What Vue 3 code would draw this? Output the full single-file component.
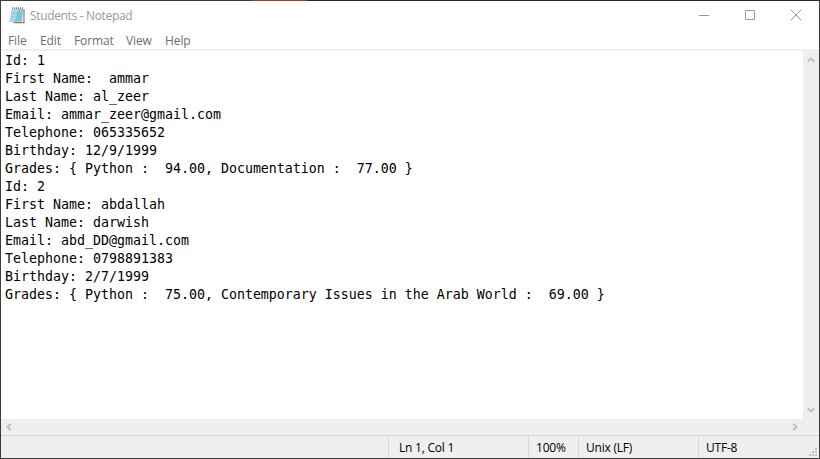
<script setup>
const menu = [
  { label: 'File', cls: 'file' },
  { label: 'Edit', cls: 'edit' },
  { label: 'Format', cls: 'format' },
  { label: 'View', cls: 'view' },
  { label: 'Help', cls: 'help' },
]

const content = [
  'Id: 1',
  'First Name:  ammar',
  'Last Name: al_zeer',
  'Email: ammar_zeer@gmail.com',
  'Telephone: 065335652',
  'Birthday: 12/9/1999',
  'Grades: { Python :  94.00, Documentation :  77.00 }',
  'Id: 2',
  'First Name: abdallah',
  'Last Name: darwish',
  'Email: abd_DD@gmail.com',
  'Telephone: 0798891383',
  'Birthday: 2/7/1999',
  'Grades: { Python :  75.00, Contemporary Issues in the Arab World :  69.00 }',
].join('\n')
</script>

<template>
  <div class="window">
    <div class="edge"></div>
    <header class="titlebar">
      <svg class="app-icon" width="16" height="17" viewBox="0 0 16 17">
        <path d="M14 2h1.6v14.2H4.5V15H14z" fill="#8d8062" />
        <path d="M3 2h11.4v13H1.5L.8 14z" fill="#e8f5f7" />
        <path d="M3 2h11l-1.2 12.8H.6z" fill="#7cc6d6" />
        <path d="M3 2h6L6 14.8H.6z" fill="#a2dce6" />
        <path d="M2.8 6.5h10M2.4 9.5h10M2 12.5h10" stroke="#6bb8cb" stroke-width=".4" />
        <path d="M3 1.5h11" stroke="#dfe3df" stroke-width="1.6" />
        <path d="M3.5 .5v1.2M5.5 .5v1.2M7.5 .5v1.2M9.5 .5v1.2M11.5 .5v1.2M13.5 .5v1.2" stroke="#425961" stroke-width="1" />
      </svg>
      <span class="title">Students - Notepad</span>
      <div class="controls">
        <svg width="10" height="10" viewBox="0 0 10 10"><path d="M0 5.5h10" /></svg>
        <svg width="10" height="10" viewBox="0 0 10 10"><path d="M.5 .5h9v9h-9z" /></svg>
        <svg width="10" height="10" viewBox="0 0 10 10"><path d="M0 0l10 10M10 0L0 10" /></svg>
      </div>
    </header>
    <nav class="menu">
      <span v-for="m in menu" :key="m.label" :class="m.cls">{{ m.label }}</span>
    </nav>
    <main class="editor">
      <pre class="text">{{ content }}</pre>
      <div class="vscroll">
        <svg width="8" height="6" viewBox="0 0 8 6"><path d="M.7 4.8L4 1.5l3.3 3.3" /></svg>
        <svg width="8" height="6" viewBox="0 0 8 6"><path d="M.7 1.2L4 4.5l3.3-3.3" /></svg>
      </div>
    </main>
    <div class="hscroll">
      <svg width="6" height="8" viewBox="0 0 6 8"><path d="M4.8 .7L1.5 4l3.3 3.3" /></svg>
      <svg width="6" height="8" viewBox="0 0 6 8"><path d="M1.2 .7L4.5 4 1.2 7.3" /></svg>
    </div>
    <footer class="status">
      <span class="cell position">Ln 1, Col 1</span>
      <span class="cell zoom">100%</span>
      <span class="cell ending">Unix (LF)</span>
      <span class="cell encoding">UTF-8</span>
      <svg class="grip" width="8" height="8" viewBox="0 0 8 8">
        <path d="M6 0h2v2H6zM3 3h2v2H3zM6 3h2v2H6zM0 6h2v2H0zM3 6h2v2H3zM6 6h2v2H6z" />
      </svg>
    </footer>
  </div>
</template>

<style>
body {
  overflow: hidden;
}
</style>

<style scoped>
.window {
  box-sizing: border-box;
  width: 820px;
  height: 459px;
  display: flex;
  flex-direction: column;
  background: #fff;
  border: solid #3c3b3e;
  border-width: 0 1px 1px;
  font: 12px/16px "Open Sans", "Noto Sans", sans-serif;
}
.edge {
  flex: none;
  height: 1px;
  background: linear-gradient(90deg, #3c393c 250px, #8c412c 250px 306px, #29292b 306px);
}
.titlebar {
  flex: none;
  height: 29px;
  display: flex;
  align-items: center;
  padding-left: 8px;
}
.app-icon {
  margin-right: 5px;
}
.title {
  color: #999;
  letter-spacing: -0.34px;
  padding-top: 1px;
}
.controls {
  display: flex;
  gap: 36px;
  margin-left: auto;
  padding: 0 18px 1px 0;
}
.controls svg {
  fill: none;
  stroke: #999;
}
.menu {
  flex: none;
  height: 19px;
  box-sizing: border-box;
  display: flex;
  padding: 3px 0 0 7px;
  color: #6d6d6d;
  letter-spacing: -0.1px;
}
.file { width: 32px; }
.edit { width: 34px; }
.format { width: 52px; }
.view { width: 39px; }
.editor {
  flex: 1;
  display: flex;
  border-top: 2px solid #efefef;
}
.text {
  flex: 1;
  margin: 0;
  padding: 1px 0 0 4px;
  color: #000;
  font: 13.29px/18px "DejaVu Sans Mono", monospace;
}
.vscroll {
  width: 16px;
  box-sizing: border-box;
  display: flex;
  flex-direction: column;
  align-items: center;
  justify-content: space-between;
  padding: 6px 1px 6px 0;
  background: #efefef;
}
.vscroll svg,
.hscroll svg {
  fill: none;
  stroke: #bfbfbf;
  stroke-width: 2;
}
.hscroll {
  flex: none;
  height: 16px;
  box-sizing: border-box;
  display: flex;
  align-items: center;
  justify-content: space-between;
  padding: 0 21px 1px 5px;
  background: #efefef;
}
.status {
  flex: none;
  height: 23px;
  box-sizing: border-box;
  display: flex;
  justify-content: flex-end;
  padding-top: 1px;
  border-top: 1px solid #d7d7d7;
  background: #efefef;
  color: #000;
  letter-spacing: -0.22px;
}
.cell {
  flex: none;
  box-sizing: border-box;
  height: 20px;
  padding-left: 7px;
  border-left: 1px solid #d7d7d7;
  line-height: 21px;
  white-space: nowrap;
}
.position { width: 140px; padding-left: 10px; }
.zoom { width: 50px; }
.ending { width: 120px; }
.encoding { width: 111px; }
.grip {
  align-self: flex-end;
  margin: 0 2px 2px 0;
  fill: #bfbfbf;
}
</style>
